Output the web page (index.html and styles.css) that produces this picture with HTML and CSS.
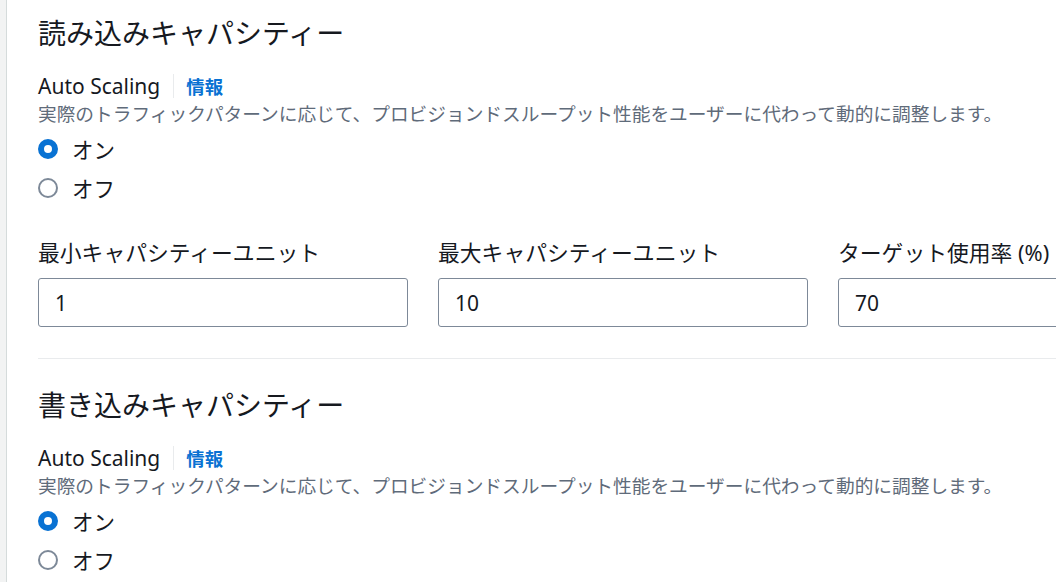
FILE: index.html
```html
<!DOCTYPE html>
<html lang="ja">
<head>
<meta charset="utf-8">
<link rel="stylesheet" href="styles.css">
</head>
<body>
<div class="panel">
  <section class="section">
    <h2 class="title">読み込みキャパシティー</h2>
    <div class="as-head"><span class="as-label">Auto Scaling</span><span class="sep"></span><a class="info">情報</a></div>
    <p class="desc">実際のトラフィックパターンに応じて、プロビジョンドスループット性能をユーザーに代わって動的に調整します。</p>
    <div class="radios">
      <label class="radio"><span class="dot on"></span><span>オン</span></label>
      <label class="radio"><span class="dot"></span><span>オフ</span></label>
    </div>
    <div class="fields">
      <div class="field"><div class="flabel">最小キャパシティーユニット</div><div class="input">1</div></div>
      <div class="field"><div class="flabel">最大キャパシティーユニット</div><div class="input">10</div></div>
      <div class="field"><div class="flabel">ターゲット使用率 (%)</div><div class="input">70</div></div>
    </div>
  </section>
  <hr class="divider">
  <section class="section">
    <h2 class="title">書き込みキャパシティー</h2>
    <div class="as-head"><span class="as-label">Auto Scaling</span><span class="sep"></span><a class="info">情報</a></div>
    <p class="desc">実際のトラフィックパターンに応じて、プロビジョンドスループット性能をユーザーに代わって動的に調整します。</p>
    <div class="radios">
      <label class="radio"><span class="dot on"></span><span>オン</span></label>
      <label class="radio"><span class="dot"></span><span>オフ</span></label>
    </div>
  </section>
</div>
</body>
</html>
```
FILE: styles.css
```css
html, body {
  margin: 0;
  padding: 0;
  height: 100%;
  overflow: hidden;
}
body {
  background: #f2f3f3;
  font-family: "Noto Sans", "Noto Sans CJK JP", sans-serif;
  color: #16191f;
}
.panel {
  margin-left: 6px;
  border-left: 1px solid #d5dbdb;
  background: #ffffff;
  min-height: 100%;
  padding: 15px 0 0 31px;
  box-sizing: border-box;
  overflow: hidden;
}
.title {
  margin: 0;
  font-size: 28px;
  font-weight: 400;
  line-height: 36px;
  color: #16191f;
}
.as-head {
  display: flex;
  align-items: center;
  margin-top: 20px;
  height: 30px;
  font-size: 21px;
}
.as-label {
  line-height: 30px;
}
.sep {
  width: 1px;
  height: 24px;
  background: #e9ebed;
  margin: 0 12px 0 13px;
}
.info {
  color: #0972d3;
  font-weight: 700;
  font-size: 18.4px;
}
.desc {
  margin: 0;
  font-size: 18.7px;
  line-height: 26px;
  color: #5f6b7a;
  white-space: nowrap;
}
.radios {
  margin-top: 2px;
  display: flex;
  flex-direction: column;
}
.radio {
  display: flex;
  align-items: center;
  height: 39px;
  font-size: 21.5px;
  gap: 14px;
}
.dot {
  width: 20px;
  height: 20px;
  border-radius: 50%;
  border: 2px solid #7d8998;
  box-sizing: border-box;
  background: #fff;
}
.dot.on {
  border: 6px solid #0972d3;
}
.fields {
  display: grid;
  grid-template-columns: 370px 370px 370px;
  column-gap: 30px;
  width: 1170px;
  margin-top: 32px;
}
.flabel {
  font-size: 21.8px;
  line-height: 28px;
  white-space: nowrap;
}
.input {
  margin-top: 11px;
  height: 49px;
  box-sizing: border-box;
  border: 1px solid #7d8998;
  border-radius: 3px;
  padding-left: 16px;
  display: flex;
  align-items: center;
  font-size: 21px;
}
.divider {
  margin: 31px 0 28px 0;
  border: 0;
  border-top: 1px solid #e9ebed;
  height: 0;
}
```
